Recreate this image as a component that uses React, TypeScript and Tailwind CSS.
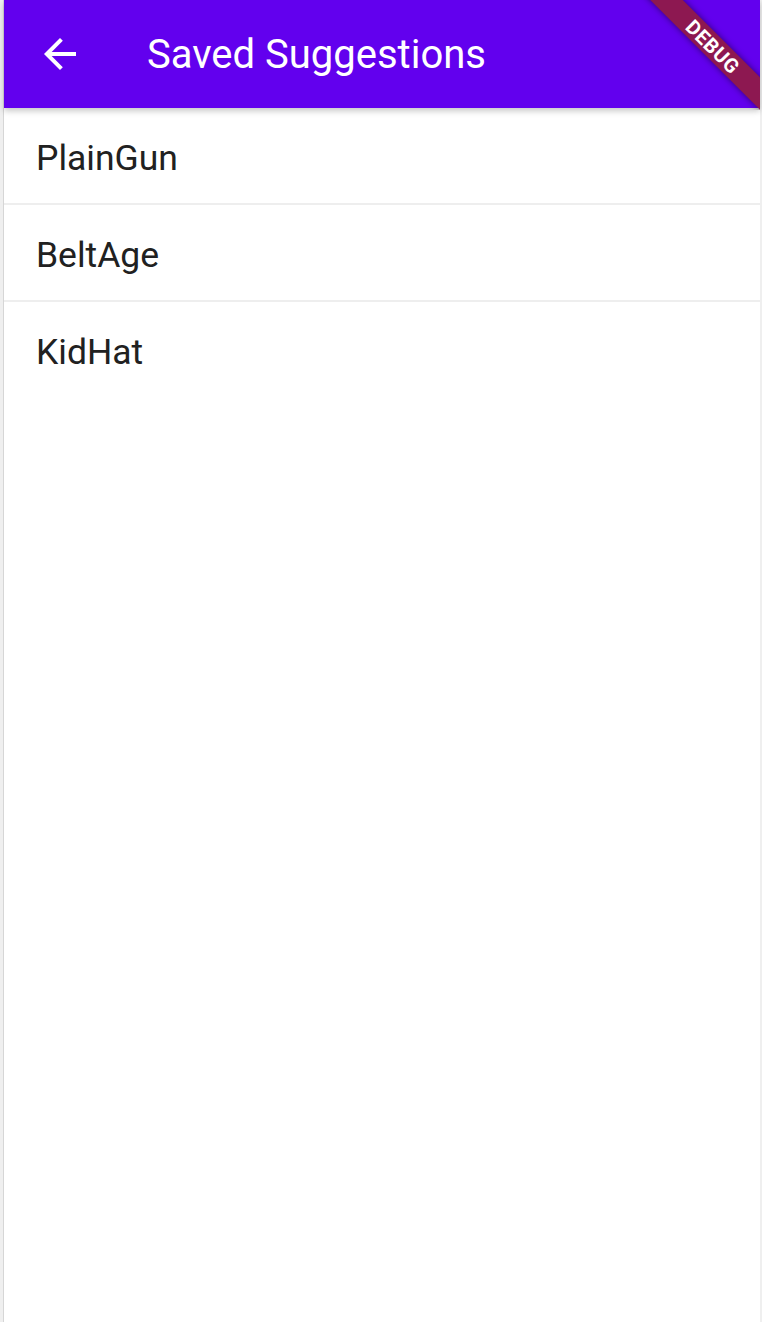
import React from "react";

const saved = ["PlainGun", "BeltAge", "KidHat"];

const DebugBanner: React.FC = () => (
  <div className="pointer-events-none absolute right-0 top-0 h-[110px] w-[130px] overflow-hidden">
    <div className="absolute right-[-53px] top-[35px] flex h-[23px] w-[200px] rotate-45 items-center justify-center bg-[#8d1851] shadow-[0_0_6px_rgba(0,0,0,0.5)]">
      <span className="text-[20px] font-bold leading-none tracking-[0.5px] text-white">
        DEBUG
      </span>
    </div>
  </div>
);

const App: React.FC = () => {
  return (
    <div
      className="flex h-[1322px] w-full bg-[#efefef]"
      style={{ fontFamily: "Roboto, 'Noto Sans', sans-serif" }}
    >
      <div className="ml-[3px] mr-[2px] flex flex-1 flex-col border-l border-[#d6d6d6] bg-white">
        <header className="relative z-10 flex h-[108px] shrink-0 items-center bg-[#6200ee] shadow-[0_3px_6px_rgba(0,0,0,0.22)]">
          <button className="ml-[32px] flex h-[48px] w-[48px] items-center justify-center">
            <svg width="48" height="48" viewBox="0 0 24 24" fill="white">
              <path d="M20 11H7.83l5.59-5.59L12 4l-8 8 8 8 1.41-1.41L7.83 13H20v-2z" />
            </svg>
          </button>
          <h1 className="ml-[63px] pt-[2px] text-[40px] font-normal text-white">Saved Suggestions</h1>
          <DebugBanner />
        </header>
        <ul>
          {saved.map((word, i) => (
            <li
              key={word}
              className={
                i < saved.length - 1
                  ? "flex h-[97px] items-center border-b-2 border-[#eeeeee] pl-[32px] pt-[6px] text-[35.5px] text-[#212121]"
                  : "flex h-[97px] items-center pl-[32px] pt-[4px] text-[35.5px] text-[#212121]"
              }
            >
              {word}
            </li>
          ))}
        </ul>
      </div>
    </div>
  );
};

export default App;
